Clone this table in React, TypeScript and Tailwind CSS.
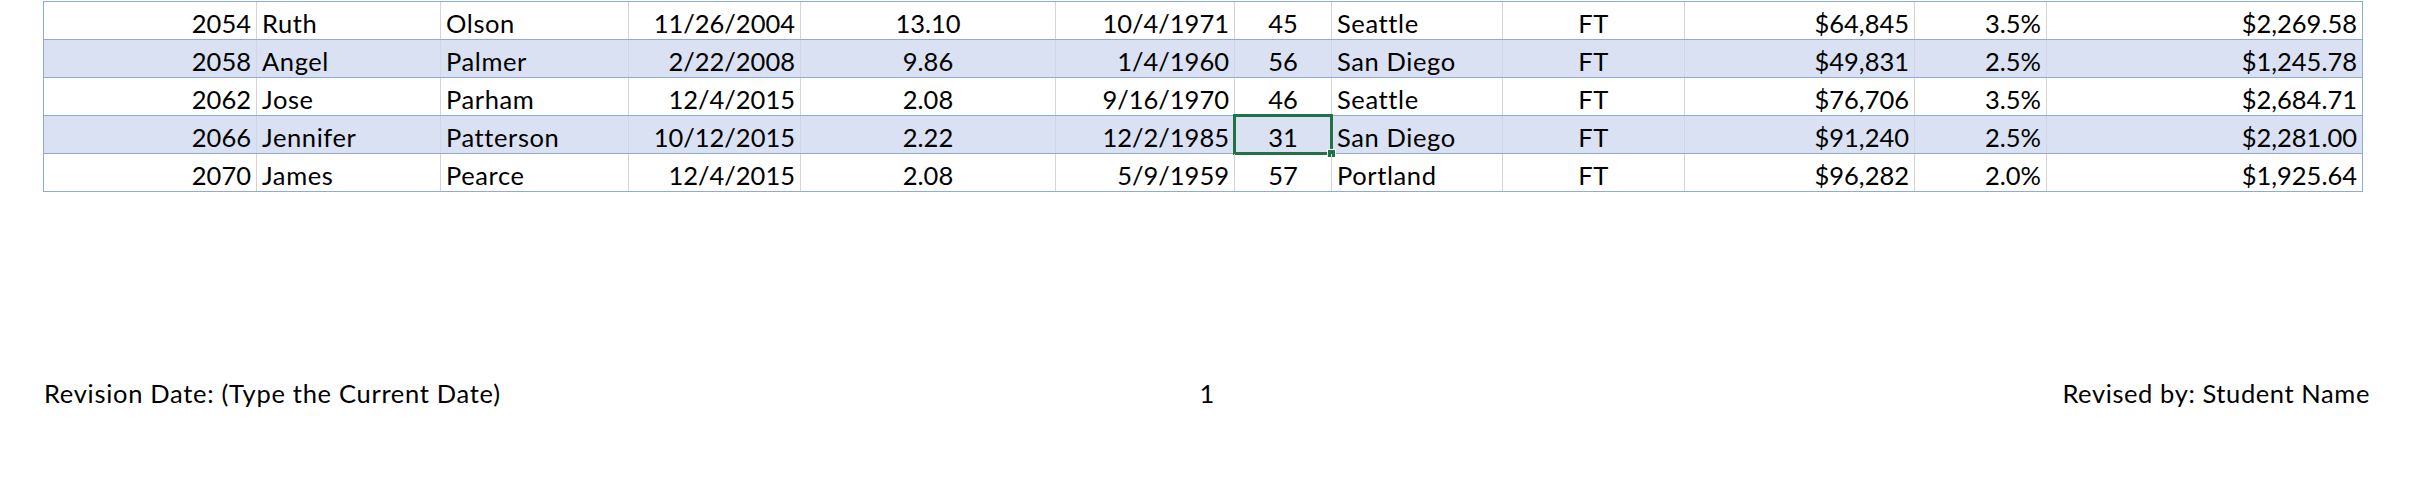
import React from "react";

type Align = "l" | "r" | "c";

const cols: { w: string; a: Align; t: boolean }[] = [
  { w: "w-[213px]", a: "r", t: false },
  { w: "w-[184px]", a: "l", t: true },
  { w: "w-[188px]", a: "l", t: true },
  { w: "w-[172px]", a: "r", t: false },
  { w: "w-[255px]", a: "c", t: false },
  { w: "w-[179px]", a: "r", t: false },
  { w: "w-[97px]", a: "c", t: false },
  { w: "w-[171px]", a: "l", t: true },
  { w: "w-[182px]", a: "c", t: true },
  { w: "w-[230px]", a: "r", t: false },
  { w: "w-[132px]", a: "r", t: false },
  { w: "w-[315px]", a: "r", t: false },
];

const rows: string[][] = [
  ["2054", "Ruth", "Olson", "11/26/2004", "13.10", "10/4/1971", "45", "Seattle", "FT", "$64,845", "3.5%", "$2,269.58"],
  ["2058", "Angel", "Palmer", "2/22/2008", "9.86", "1/4/1960", "56", "San Diego", "FT", "$49,831", "2.5%", "$1,245.78"],
  ["2062", "Jose", "Parham", "12/4/2015", "2.08", "9/16/1970", "46", "Seattle", "FT", "$76,706", "3.5%", "$2,684.71"],
  ["2066", "Jennifer", "Patterson", "10/12/2015", "2.22", "12/2/1985", "31", "San Diego", "FT", "$91,240", "2.5%", "$2,281.00"],
  ["2070", "James", "Pearce", "12/4/2015", "2.08", "5/9/1959", "57", "Portland", "FT", "$96,282", "2.0%", "$1,925.64"],
];

const alignClass: Record<Align, string> = {
  l: "justify-start",
  r: "justify-end",
  c: "justify-center",
};

export default function App() {
  return (
    <div className="w-[2430px] h-[491px] bg-white text-black font-[Lato,sans-serif] text-[25.5px] overflow-hidden">
      <div className="ml-[43px] mt-[1px] w-[2320px] border-l border-r border-t border-[#8EA9DB] flex flex-col">
        {rows.map((r, ri) => {
          const banded = ri % 2 === 1;
          return (
            <div
              key={ri}
              className={`flex h-[38px] border-b border-[#8EA9DB] ${banded ? "bg-[#D9E1F2]" : "bg-white"}`}
            >
              {r.map((v, ci) => {
                const c = cols[ci];
                const last = ci === cols.length - 1;
                const selected = ri === 3 && ci === 6;
                return (
                  <div
                    key={ci}
                    className={`relative h-full shrink-0 ${c.w} ${alignClass[c.a]} flex items-end px-[5px] pb-[1px] leading-[30px] whitespace-nowrap ${
                      c.t ? "tracking-[0.6px]" : ""
                    } ${last ? "" : banded ? "border-r border-[#D0D7E5]" : "border-r border-[#D4D4D4]"}`}
                  >
                    <span>{v}</span>
                    {selected && (
                      <div className="absolute -left-[2px] -top-[2px] -right-[2px] -bottom-[2px] border-[3px] border-[#217346] pointer-events-none">
                        <div className="absolute -right-[6px] -bottom-[6px] w-[9px] h-[9px] bg-[#217346] border border-white" />
                      </div>
                    )}
                  </div>
                );
              })}
            </div>
          );
        })}
      </div>

      <div className="ml-[44px] w-[2326px] mt-[186px] grid grid-cols-3 leading-[30px] whitespace-nowrap">
        <div className="text-left tracking-[0.7px]">Revision Date: (Type the Current Date)</div>
        <div className="text-center">1</div>
        <div className="text-right tracking-[0.6px]">Revised by: Student Name</div>
      </div>
    </div>
  );
}
